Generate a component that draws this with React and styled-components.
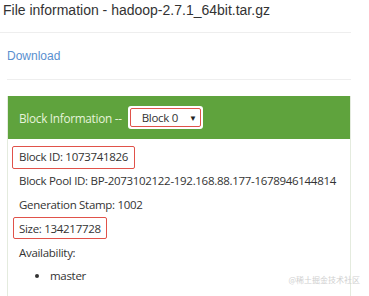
import React from "react";
import styled, { createGlobalStyle } from "styled-components";

const GlobalStyle = createGlobalStyle`
  body {
    margin: 0;
    background: #fff;
    font-family: "Liberation Sans", Arial, sans-serif;
    overflow: hidden;
  }
`;

const Page = styled.div`
  position: relative;
  width: 369px;
  height: 296px;
  overflow: hidden;
`;

const Content = styled.div`
  width: 351px;
  display: flex;
  flex-direction: column;
`;

const Title = styled.div`
  height: 21px;
  padding-left: 3px;
  font-size: 14px;
  line-height: 21px;
  color: #333;
  white-space: nowrap;
`;

const Rule = styled.div`
  height: 1px;
  background: #eee;
  margin-top: ${(p) => p.$top}px;
  margin-left: ${(p) => p.$left || 0}px;
`;

const DownloadRow = styled.div`
  height: 46px;
  display: flex;
  align-items: center;
  padding-left: 7px;
`;

const Link = styled.a`
  font-size: 12px;
  color: #5a8fcf;
  text-decoration: none;
`;

const Panel = styled.div`
  margin: 16px 0 0 7px;
  border: 1px solid #e4ebde;
  border-top: none;
  height: 230px;
  display: flex;
  flex-direction: column;
`;

const PanelHeading = styled.div`
  height: 43px;
  background: #5fa33d;
  display: flex;
  align-items: center;
  padding-left: 11px;
  gap: 6px;
  font-family: "Open Sans", sans-serif;
  font-size: 11.8px;
  letter-spacing: -0.3px;
  color: #e6f3da;
`;

const SelectBox = styled.div`
  position: relative;
  width: 75px;
  height: 23px;
  background: #fff;
  border-radius: 3px;
  display: flex;
  align-items: center;
  box-sizing: border-box;
  padding: 0 6px 0 14px;
  justify-content: space-between;
  color: #333;
  font-size: 11.5px;
`;

const Mark = styled.div`
  position: absolute;
  inset: ${(p) => p.$inset || 0};
  border: 1px solid #e0524a;
  border-radius: 2px;
  pointer-events: none;
`;

const Arrow = styled.span`
  font-size: 8px;
  color: #222;
`;

const PanelBody = styled.div`
  display: flex;
  flex-direction: column;
  padding: 6px 0 0 11px;
  font-family: "Open Sans", sans-serif;
  font-size: 11.5px;
  letter-spacing: -0.3px;
  color: #333;
`;

const Line = styled.div`
  position: relative;
  height: 23.8px;
  display: flex;
  align-items: center;
  white-space: nowrap;
  align-self: flex-start;
`;

const Bullets = styled.ul`
  margin: 0;
  padding-left: 31px;
  list-style: disc;
  line-height: 23.8px;
`;

const Watermark = styled.div`
  position: absolute;
  right: 9px;
  bottom: 11px;
  font-family: "Noto Sans CJK SC", sans-serif;
  font-size: 8px;
  color: #d0d0d0;
`;

export default function App() {
  return (
    <Page>
      <GlobalStyle />
      <Content>
        <Title>File information - hadoop-2.7.1_64bit.tar.gz</Title>
        <Rule $top={11} />
        <DownloadRow>
          <Link href="#">Download</Link>
        </DownloadRow>
        <Rule $top={0} $left={7} />
        <Panel>
          <PanelHeading>
            <span>Block Information --</span>
            <SelectBox>
              <Mark $inset="2px 2px 2px 2px" />
              <span>Block 0</span>
              <Arrow>▼</Arrow>
            </SelectBox>
          </PanelHeading>
          <PanelBody>
            <Line>
              <Mark $inset="1px -7px 0 -7px" />
              Block ID: 1073741826
            </Line>
            <Line>Block Pool ID: BP-2073102122-192.168.88.177-1678946144814</Line>
            <Line>Generation Stamp: 1002</Line>
            <Line>
              <Mark $inset="1px -6px 1px -6px" />
              Size: 134217728
            </Line>
            <Line>Availability:</Line>
            <Bullets>
              <li>master</li>
            </Bullets>
          </PanelBody>
        </Panel>
      </Content>
      <Watermark>@稀土掘金技术社区</Watermark>
    </Page>
  );
}
